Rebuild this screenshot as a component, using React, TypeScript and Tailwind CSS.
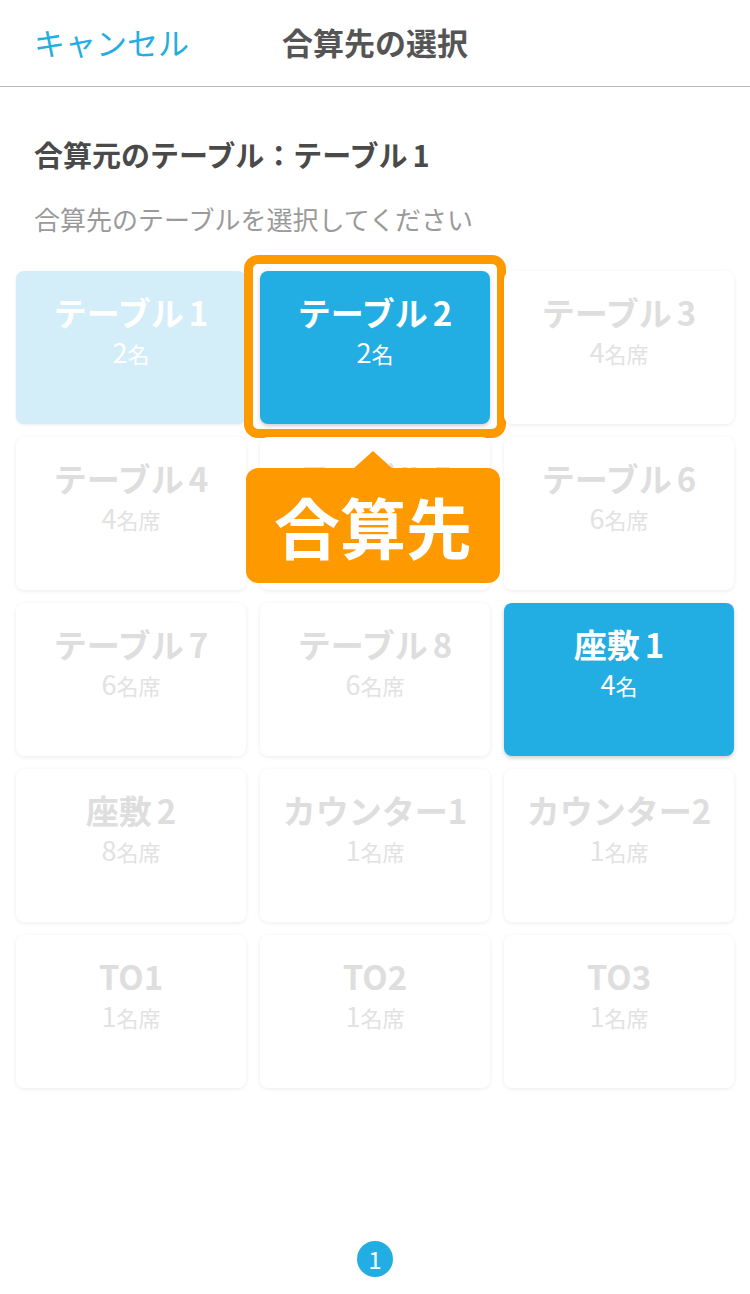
import React from "react";

type T = { name: string; sub: string; state: "src" | "dst" | "on" | "off" };

const tables: T[] = [
  { name: "テーブル1", sub: "2名", state: "src" },
  { name: "テーブル2", sub: "2名", state: "dst" },
  { name: "テーブル3", sub: "4名席", state: "off" },
  { name: "テーブル4", sub: "4名席", state: "off" },
  { name: "テーブル5", sub: "4名席", state: "off" },
  { name: "テーブル6", sub: "6名席", state: "off" },
  { name: "テーブル7", sub: "6名席", state: "off" },
  { name: "テーブル8", sub: "6名席", state: "off" },
  { name: "座敷1", sub: "4名", state: "on" },
  { name: "座敷2", sub: "8名席", state: "off" },
  { name: "カウンター1", sub: "1名席", state: "off" },
  { name: "カウンター2", sub: "1名席", state: "off" },
  { name: "TO1", sub: "1名席", state: "off" },
  { name: "TO2", sub: "1名席", state: "off" },
  { name: "TO3", sub: "1名席", state: "off" },
];

function splitName(n: string) {
  const m = n.match(/^(.*?)(\d+)$/);
  if (!m) return <>{n}</>;
  if (m[1].endsWith("ー") || m[1] === "TO") return <>{n}</>;
  return (
    <>
      {m[1]}
      <span className="ml-[5px]">{m[2]}</span>
    </>
  );
}

function Card({ t }: { t: T }) {
  const base =
    "relative h-[153px] rounded-[8px] flex flex-col items-center pt-[20px]";
  let cls = "";
  let titleC = "";
  let subC = "";
  if (t.state === "src") {
    cls = "bg-[#d3eef9] shadow-[0_1px_3px_rgba(0,0,0,0.08)]";
    titleC = "text-white";
    subC = "text-white";
  } else if (t.state === "dst" || t.state === "on") {
    cls = "bg-[#22aee3] shadow-[0_2px_4px_rgba(0,0,0,0.2)]";
    titleC = "text-white";
    subC = "text-white";
  } else {
    cls = "bg-white shadow-[0_1px_4px_rgba(0,0,0,0.08)]";
    titleC = "text-[#dedede]";
    subC = "text-[#e2e2e2]";
  }
  const m = t.sub.match(/^(\d+)(.*)$/);
  return (
    <div className={`${base} ${cls}`}>
      {t.state === "dst" && (
        <div className="absolute left-[-16px] right-[-16px] top-[-16px] bottom-[-14px] rounded-[14px] border-[9px] border-[#ff9900] pointer-events-none" />
      )}
      <div className={`text-[33px] leading-[42px] font-bold ${titleC}`}>
        {splitName(t.name)}
      </div>
      <div className={`mt-[4px] text-[22px] leading-[30px] ${subC}`}>
        {m ? (
          <>
            <span className="text-[27px]">{m[1]}</span>
            <span>{m[2]}</span>
          </>
        ) : (
          t.sub
        )}
      </div>
    </div>
  );
}

export default function App() {
  return (
    <div
      className="w-[750px] h-[1294px] bg-white relative overflow-hidden"
      style={{ fontFamily: '"Noto Sans CJK JP", "Noto Sans", sans-serif' }}
    >
      <div className="h-[87px] border-b-[1.5px] border-[#b8b8b8] flex items-center pb-[3px]">
        <div className="ml-[34px] text-[31px] text-[#22aee3] leading-none">
          キャンセル
        </div>
        <div className="ml-[93px] text-[31px] font-bold text-[#555555] leading-none">
          合算先の選択
        </div>
      </div>
      <div className="px-[34px] pt-[48px] text-[29px] font-bold text-[#4a4a4a] leading-[38px]">
        合算元のテーブル：テーブル<span className="ml-[5px]">1</span>
      </div>
      <div className="px-[34px] mt-[29px] text-[26px] text-[#9a9a9a] leading-[34px]">
        合算先のテーブルを選択してください
      </div>
      <div className="relative mt-[35px] px-[16px] grid grid-cols-3 gap-x-[14px] gap-y-[13px]">
        {tables.map((t) => (
          <Card key={t.name} t={t} />
        ))}
        <div className="absolute left-[246px] top-[197px] w-[254px] h-[115px]">
          <div className="absolute left-[107px] top-[-17px] w-0 h-0 border-l-[20px] border-r-[20px] border-b-[18px] border-l-transparent border-r-transparent border-b-[#ff9900]" />
          <div className="w-full h-full rounded-[12px] bg-[#ff9900] flex items-center justify-center text-white font-bold text-[66px] leading-none pb-[2px]">
            合算先
          </div>
        </div>
      </div>
      <div className="absolute left-[357px] top-[1241px] w-[36px] h-[36px] rounded-full bg-[#22aee3] flex items-center justify-center text-white text-[24px] leading-none">
        1
      </div>
    </div>
  );
}
